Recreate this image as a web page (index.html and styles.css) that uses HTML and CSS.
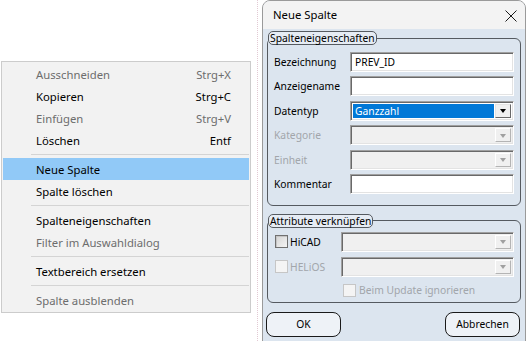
FILE: index.html
```html
<!DOCTYPE html>
<html lang="de">
<head>
<meta charset="utf-8">
<title>Neue Spalte</title>
<link rel="stylesheet" href="styles.css">
</head>
<body>
<div class="desktop">
  <div class="guide"></div>

  <ul class="menu">
    <li class="item disabled"><span>Ausschneiden</span><span>Strg+X</span></li>
    <li class="item"><span>Kopieren</span><span>Strg+C</span></li>
    <li class="item disabled"><span>Einfügen</span><span>Strg+V</span></li>
    <li class="item"><span>Löschen</span><span>Entf</span></li>
    <li class="sep"></li>
    <li class="item active"><span>Neue Spalte</span></li>
    <li class="item"><span>Spalte löschen</span></li>
    <li class="sep"></li>
    <li class="item"><span>Spalteneigenschaften</span></li>
    <li class="item disabled"><span>Filter im Auswahldialog</span></li>
    <li class="sep"></li>
    <li class="item"><span>Textbereich ersetzen</span></li>
    <li class="sep"></li>
    <li class="item disabled"><span>Spalte ausblenden</span></li>
  </ul>

  <div class="dialog">
    <div class="titlebar">
      <span class="title">Neue Spalte</span>
      <svg class="close" width="12" height="12" viewBox="0 0 12 12"><path d="M0.5 0.5 L11.5 11.5 M11.5 0.5 L0.5 11.5" stroke="#1a1a1a" stroke-width="1" fill="none"/></svg>
    </div>
    <div class="client">
      <fieldset class="group">
        <legend>Spalteneigenschaften</legend>
        <div class="props">
          <label>Bezeichnung</label>
          <div class="field"><span class="val">PREV_ID</span></div>
          <label>Anzeigename</label>
          <div class="field"></div>
          <label>Datentyp</label>
          <div class="field combo"><span class="sel">Ganzzahl</span><span class="btn"><i class="tri"></i></span></div>
          <label class="dis">Kategorie</label>
          <div class="field combo off"><span class="sel"></span><span class="btn"><i class="tri"></i></span></div>
          <label class="dis">Einheit</label>
          <div class="field combo off"><span class="sel"></span><span class="btn"><i class="tri"></i></span></div>
          <label>Kommentar</label>
          <div class="field"></div>
        </div>
      </fieldset>

      <fieldset class="group second">
        <legend>Attribute verknüpfen</legend>
        <div class="links">
          <div class="check"><span class="box"></span><span>HiCAD</span></div>
          <div class="field combo off"><span class="sel"></span><span class="btn"><i class="tri"></i></span></div>
          <div class="check dis"><span class="box"></span><span>HELiOS</span></div>
          <div class="field combo off"><span class="sel"></span><span class="btn"><i class="tri"></i></span></div>
          <div class="check dis sub"><span class="box"></span><span>Beim Update ignorieren</span></div>
        </div>
      </fieldset>

      <div class="buttons">
        <button class="pb">OK</button>
        <button class="pb">Abbrechen</button>
      </div>
    </div>
  </div>
</div>
</body>
</html>
```

FILE: styles.css
```css
html, body {
  margin: 0;
  padding: 0;
  background: #ffffff;
  overflow: hidden;
}
.desktop {
  position: relative;
  width: 527px;
  height: 341px;
  overflow: hidden;
  font-family: "Noto Sans", "Open Sans", sans-serif;
}
.guide {
  position: absolute;
  left: 257px;
  top: 0;
  height: 341px;
  border-left: 1px dotted #e2c9d3;
}

/* context menu */
.menu {
  position: absolute;
  left: 1px;
  top: 61px;
  width: 246px;
  margin: 0;
  padding: 1px 1px;
  list-style: none;
  background: #f2f2f2;
  border: 1px solid #cccccc;
  font-size: 11.3px;
  color: #000;
}
.item {
  height: 22px;
  padding: 0 18px 0 33px;
  display: flex;
  justify-content: space-between;
  align-items: center;
}
.item.disabled { color: #6d6d6d; }
.item.active { background: #91c9f7; }
.sep {
  height: 7px;
  margin-left: 28px;
  box-sizing: border-box;
  padding-top: 3px;
}
.sep::after {
  content: "";
  display: block;
  height: 1px;
  background: #d4d4d4;
}

/* dialog window */
.dialog {
  position: absolute;
  left: 262px;
  top: 0;
  width: 262px;
  height: 360px;
  border: 1px solid #9a9a9a;
  border-radius: 8px 8px 0 0;
  overflow: hidden;
  background: #dce5ef;
}
.titlebar {
  height: 28px;
  background: #f3f3f3;
  display: flex;
  align-items: center;
  justify-content: space-between;
  padding: 0 8px 0 10px;
  font-size: 11.3px;
  color: #000;
}
.title { margin-top: -1px; }
.close { display: block; margin-top: 2px; }

.client {
  padding-top: 2px;
  font-size: 10.3px;
  color: #000;
}
.group {
  margin: 0 4px;
  padding: 0;
  border: 1px solid #555a60;
  border-radius: 6px;
  min-width: 0;
}
.group legend {
  margin: 0;
  padding: 0 1px;
  height: 14px;
  box-sizing: border-box;
  border: 1px solid #555a60;
  border-radius: 5px;
  background: #e6ecf4;
  font-size: 10.3px;
  line-height: 12px;
}
.props {
  display: grid;
  grid-template-columns: 76px 1fr;
  grid-auto-rows: 20px;
  row-gap: 4.4px;
  padding: 7px 6px 11px 6px;
  align-items: center;
}
.props label { white-space: nowrap; }
.dis { color: #a2a6ab; }

.field {
  height: 20px;
  box-sizing: border-box;
  background: #ffffff;
  border-top: 1px solid #a0a0a0;
  border-left: 1px solid #a0a0a0;
  border-right: 1px solid #ffffff;
  border-bottom: 1px solid #ffffff;
  box-shadow: inset 1px 1px 0 #696969, inset -1px -1px 0 #e3e3e3;
  display: flex;
  align-items: center;
  padding-left: 4px;
}
.val { font-size: 10.3px; }
.combo { padding: 2px 2px 2px 2px; align-items: stretch; }
.combo .sel {
  flex: 1;
  background: #0078d7;
  color: #fff;
  padding-left: 2px;
  display: flex;
  align-items: center;
  font-size: 10.3px;
}
.combo .btn {
  width: 16px;
  margin-left: 1px;
  box-sizing: border-box;
  background: #f0f0f0;
  border-top: 1px solid #e3e3e3;
  border-left: 1px solid #e3e3e3;
  border-right: 1px solid #696969;
  border-bottom: 1px solid #696969;
  display: flex;
  align-items: center;
  justify-content: center;
}
.tri {
  display: block;
  width: 0;
  height: 0;
  border-left: 3.5px solid transparent;
  border-right: 3.5px solid transparent;
  border-top: 4px solid #000;
  margin-top: 1px;
}
.combo.off { background: #f0f0f0; }
.combo.off .sel { background: transparent; }
.combo.off .btn {
  border-right-color: #b4b4b4;
  border-bottom-color: #b4b4b4;
  border-top-color: #ffffff;
  border-left-color: #ffffff;
}
.combo.off .tri { border-top-color: #a0a0a0; }

.second { margin-top: 8px; }
.links {
  display: grid;
  grid-template-columns: 67px 1fr;
  grid-template-rows: 20px 20px 17px;
  row-gap: 5px;
  padding: 4px 6px 3px 6px;
  align-items: center;
}
.check {
  display: flex;
  align-items: center;
  gap: 2px;
  padding-left: 1px;
}
.check .box {
  width: 11px;
  height: 11px;
  border: 1px solid #707070;
  background: linear-gradient(135deg, #d4d4d4, #f4f4f4);
  box-shadow: inset 1px 1px 0 #c4c4c4;
}
.check.dis .box {
  border-color: #c6c6c6;
  background: #f4f4f4;
  box-shadow: none;
}
.check.sub {
  grid-column: 2;
  padding-left: 2px;
  gap: 3px;
}

.buttons {
  display: flex;
  justify-content: space-between;
  margin-top: 9px;
  padding: 0 5px 0 3px;
}
.pb {
  width: 75px;
  height: 25px;
  border: 1px solid #1a1a1a;
  border-radius: 8px;
  background: #eef2f7;
  font-family: "Noto Sans", "Open Sans", sans-serif;
  font-size: 10.3px;
  color: #000;
  padding: 0;
}
```
